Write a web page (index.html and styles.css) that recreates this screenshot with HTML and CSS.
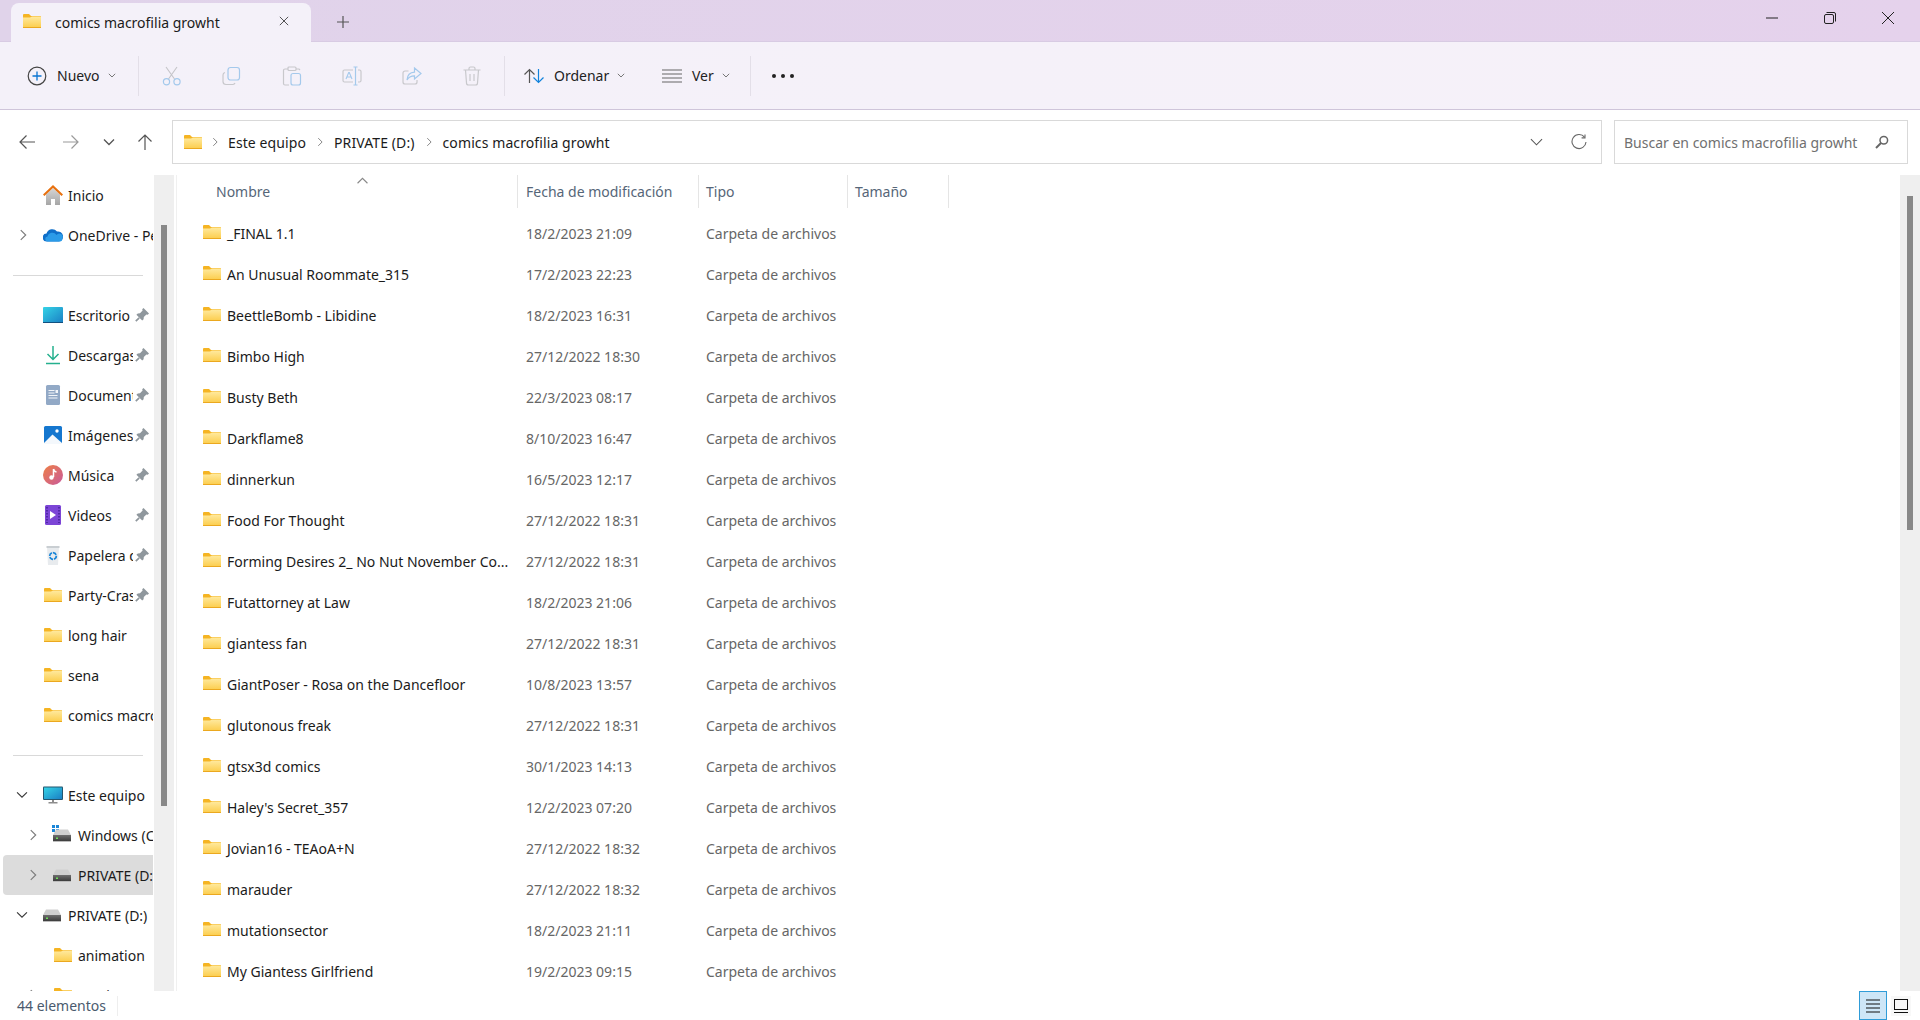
FILE: index.html
```html
<!DOCTYPE html>
<html lang="es">
<head>
  <meta charset="UTF-8" />
  <title>comics macrofilia growht</title>
  <link rel="stylesheet" href="styles.css">
</head>
<body>

<svg class="defs" width="0" height="0">
  <defs>
    <linearGradient id="folderFill" x1="0" y1="0" x2="0" y2="1">
      <stop offset="0" stop-color="#ffeaa0"/>
      <stop offset="1" stop-color="#fccf52"/>
    </linearGradient>
    <linearGradient id="driveFill" x1="0" y1="0" x2="0" y2="1">
      <stop offset="0" stop-color="#6e6e6e"/>
      <stop offset="1" stop-color="#3c3c3c"/>
    </linearGradient>
    <symbol id="folder" viewBox="0 0 18 14">
      <path d="M0 1a1 1 0 0 1 1-1h5l2 2h9a1 1 0 0 1 1 1v10a1 1 0 0 1-1 1H1a1 1 0 0 1-1-1z" fill="#f5b423"/>
      <path d="M0 3.400h7l2-1h8a1 1 0 0 1 1 1V13H0z" fill="url(#folderFill)"/>
      <rect x="0" y="13" width="18" height="1" fill="#eba81f"/>
    </symbol>
    <symbol id="pin" viewBox="0 0 14 14">
      <path d="M8.500 0 14 5.500 12.700 6.800 11.400 6.400 8.800 9 8.600 11.200 7.200 12.600 1.400 6.800 2.800 5.400 5 5.200 7.600 2.600 7.200 1.300z" fill="#8f979d"/>
      <path d="M4.200 9.800 .8 13.200" stroke="#8f979d" stroke-width="1.700" fill="none"/>
    </symbol>
    <symbol id="chev-right" viewBox="0 0 10 14">
      <path d="M2.500 1.500 8 7 2.500 12.500" fill="none" stroke="#7c7c7c" stroke-width="1.300"/>
    </symbol>
    <symbol id="chev-down" viewBox="0 0 14 10">
      <path d="M1.500 2 7 7.500 12.500 2" fill="none" stroke="#3a3a3a" stroke-width="1.300"/>
    </symbol>
    <symbol id="drive" viewBox="0 0 20 14">
      <path d="M3 1.500h12L18 7H0z" fill="#cfcfcf"/>
      <rect x="0" y="7" width="18" height="6" fill="url(#driveFill)"/>
      <rect x="0" y="13" width="18" height="1" fill="#bdbdbd"/>
      <rect x="3" y="9.500" width="2" height="1.500" fill="#6fe05a"/>
    </symbol>
  </defs>
</svg>

<header class="titlebar">
  <div class="tab">
    <svg class="ico-folder"><use href="#folder"/></svg>
    <span class="tab-title">comics macrofilia growht</span>
    <svg class="tab-close" viewBox="0 0 12 12"><path d="M1 1l10 10M11 1 1 11" stroke="#333" stroke-width="1" fill="none"/></svg>
  </div>
  <svg class="tab-add" viewBox="0 0 12 12"><path d="M6 0v12M0 6h12" stroke="#555" stroke-width="1.200" fill="none"/></svg>
  <div class="win-controls">
    <svg viewBox="0 0 12 12"><path d="M0 6h12" stroke="#222" stroke-width="1" fill="none"/></svg>
    <svg viewBox="0 0 12 12"><rect x="0.500" y="2.500" width="9" height="9" rx="1.500" fill="none" stroke="#222"/><path d="M2.500 .500H10a1.500 1.500 0 0 1 1.500 1.500v7.500" fill="none" stroke="#222"/></svg>
    <svg viewBox="0 0 12 12"><path d="M0 0l12 12M12 0 0 12" stroke="#222" stroke-width="1" fill="none"/></svg>
  </div>
</header>

<div class="toolbar">
  <div class="tool tool-new">
    <svg class="tool-ico" viewBox="0 0 20 20"><circle cx="10" cy="10" r="8.800" fill="none" stroke="#444" stroke-width="1.200"/><path d="M10 5.500v9M5.500 10h9" stroke="#0a74d1" stroke-width="1.300"/></svg>
    <span>Nuevo</span>
    <svg class="caret" viewBox="0 0 8 5"><path d="M.8.800 4 4 7.200.8" fill="none" stroke="#777"/></svg>
  </div>
  <i class="tool-sep"></i>
  <div class="tool-group">
    <svg class="tool-ico" viewBox="0 0 20 20"><path d="M4 1l8.500 12M15 1 6.500 13" stroke="#c4c4c8" stroke-width="1.100" fill="none"/><circle cx="4.500" cy="15.800" r="3.100" fill="none" stroke="#a4c9ec" stroke-width="1.200"/><circle cx="15" cy="15.800" r="3.100" fill="none" stroke="#a4c9ec" stroke-width="1.200"/></svg>
    <svg class="tool-ico" viewBox="0 0 20 20"><path d="M3 6.500A2.500 2.500 0 0 0 1 9v6.500A3 3 0 0 0 4 18.500h7a2.500 2.500 0 0 0 2-1.500" fill="none" stroke="#c8c8cc" stroke-width="1.200"/><rect x="6" y="1.500" width="11.500" height="12.500" rx="2.500" fill="none" stroke="#a4c9ec" stroke-width="1.200"/></svg>
    <svg class="tool-ico" viewBox="0 0 20 20"><path d="M6 3H3a1.500 1.500 0 0 0-1.500 1.500v13A1.500 1.500 0 0 0 3 19h4M14 3h3l1 1" fill="none" stroke="#c8c8cc" stroke-width="1.200"/><rect x="6" y="1" width="8" height="3.500" rx="1" fill="none" stroke="#c8c8cc" stroke-width="1.200"/><rect x="9" y="7.500" width="9.500" height="11.500" rx="2" fill="none" stroke="#a4c9ec" stroke-width="1.200"/></svg>
    <svg class="tool-ico" viewBox="0 0 20 20"><path d="M11 4H2.500A1.500 1.500 0 0 0 1 5.500v9A1.500 1.500 0 0 0 2.500 16H11M16 4h1.500A1.500 1.500 0 0 1 19 5.500v9a1.500 1.500 0 0 1-1.500 1.500H16" fill="none" stroke="#c8c8cc" stroke-width="1.200"/><path d="M11.500 1h2v18h-2M15.500 1h-2M15.500 19h-2" fill="none" stroke="#a4c9ec" stroke-width="1.200"/><path d="M4 13l2.700-6.500h.6L10 13M5 11h4" fill="none" stroke="#a4c9ec" stroke-width="1.100"/></svg>
    <svg class="tool-ico" viewBox="0 0 20 20"><path d="M6.500 5H3a2 2 0 0 0-2 2v9a2 2 0 0 0 2 2h10a2 2 0 0 0 2-2v-2" fill="none" stroke="#c8c8cc" stroke-width="1.200"/><path d="M12.500 2l6.500 5.500-6.500 5.500V9.800C9 9.800 6.500 11 5 14c.3-4.500 3-7.500 7.500-7.800z" fill="none" stroke="#a4c9ec" stroke-width="1.200"/></svg>
    <svg class="tool-ico" viewBox="0 0 20 20"><path d="M1.500 4h17M7 4V2.500A1.500 1.500 0 0 1 8.500 1h3A1.500 1.500 0 0 1 13 2.500V4M3.500 4l1 13a2 2 0 0 0 2 2h7a2 2 0 0 0 2-2l1-13M8 8v7M12 8v7" fill="none" stroke="#c8c8cc" stroke-width="1.200"/></svg>
  </div>
  <i class="tool-sep"></i>
  <div class="tool tool-sort">
    <svg class="tool-ico" viewBox="0 0 20 16"><path d="M5.500 15V1.500M.5 6.500l5-5 5 5" fill="none" stroke="#555" stroke-width="1.200"/><path d="M14.500 1v13.500M9.500 9.500l5 5 5-5" fill="none" stroke="#1283dc" stroke-width="1.200"/></svg>
    <span>Ordenar</span>
    <svg class="caret" viewBox="0 0 8 5"><path d="M.8.800 4 4 7.200.8" fill="none" stroke="#777"/></svg>
  </div>
  <div class="tool tool-view">
    <svg class="tool-ico" viewBox="0 0 20 14"><path d="M0 1h20M0 5h20M0 9h20M0 13h20" stroke="#666" stroke-width="1.100"/></svg>
    <span>Ver</span>
    <svg class="caret" viewBox="0 0 8 5"><path d="M.8.800 4 4 7.200.8" fill="none" stroke="#777"/></svg>
  </div>
  <i class="tool-sep"></i>
  <div class="more"><i></i><i></i><i></i></div>
</div>

<div class="navbar">
  <div class="nav-btns">
    <svg viewBox="0 0 16 16"><path d="M16 8H1M7.500 1.500 1 8l6.500 6.500" fill="none" stroke="#555" stroke-width="1.200"/></svg>
    <svg class="nav-fwd" viewBox="0 0 16 16"><path d="M0 8h15M8.500 1.500 15 8l-6.500 6.500" fill="none" stroke="#9a9a9a" stroke-width="1.200"/></svg>
    <svg class="nav-down" viewBox="0 0 12 8"><path d="M1 1.500 6 6.500 11 1.500" fill="none" stroke="#555" stroke-width="1.300"/></svg>
    <svg viewBox="0 0 16 16"><path d="M8 16V1M1.500 7.500 8 1l6.500 6.500" fill="none" stroke="#555" stroke-width="1.200"/></svg>
  </div>
  <div class="address">
    <svg class="ico-folder"><use href="#folder"/></svg>
    <svg class="crumb-sep"><use href="#chev-right"/></svg>
    <span>Este equipo</span>
    <svg class="crumb-sep"><use href="#chev-right"/></svg>
    <span>PRIVATE (D:)</span>
    <svg class="crumb-sep"><use href="#chev-right"/></svg>
    <span>comics macrofilia growht</span>
    <svg class="addr-down" viewBox="0 0 14 8"><path d="M1 1l6 6 6-6" fill="none" stroke="#555" stroke-width="1.100"/></svg>
    <svg class="addr-refresh" viewBox="0 0 16 16"><path d="M13.500 3.200A7 7 0 1 0 15 8" fill="none" stroke="#666" stroke-width="1.100"/><path d="M14 .500v3.400h-3.400" fill="none" stroke="#666" stroke-width="1.100"/></svg>
  </div>
  <div class="search">
    <span>Buscar en comics macrofilia growht</span>
    <svg viewBox="0 0 14 14"><circle cx="8.800" cy="5.200" r="3.800" fill="none" stroke="#666" stroke-width="1.500"/><path d="M6 8 1 13" stroke="#666" stroke-width="2"/></svg>
  </div>
</div>

<div class="main">
  <nav class="sidebar">
    <div class="side-item">
      <span class="twist"></span>
      <svg class="side-ico" viewBox="0 0 20 20"><defs><linearGradient id="homeFill" x1="0" y1="0" x2="0" y2="1"><stop offset="0" stop-color="#d6d6d6"/><stop offset="1" stop-color="#a6a6a6"/></linearGradient></defs><path d="M3 9.500 10 3l7 6.500V20h-5v-6H8v6H3z" fill="url(#homeFill)"/><path d="M.7 10.300 10 1.500l9.300 8.800" fill="none" stroke="#e8710f" stroke-width="2.100"/></svg>
      <span class="side-label">Inicio</span>
    </div>
    <div class="side-item">
      <span class="twist"><svg><use href="#chev-right"/></svg></span>
      <svg class="side-ico" viewBox="0 0 20 14"><path d="M4 13.500a4 4 0 0 1-.5-8A6 6 0 0 1 14 3.500a4.500 4.500 0 0 1 2 10z" fill="#0f6fc9"/><path d="M5 13.500a2.500 2.500 0 0 1-.5-5 5 5 0 0 1 9-1.500 3.500 3.500 0 0 1 6 3.500c0 2-1 3-2.500 3z" fill="#2b9be8"/></svg>
      <span class="side-label">OneDrive - Personal</span>
    </div>
    <hr class="side-div">

    <div class="side-item">
      <span class="twist"></span>
      <svg class="side-ico" viewBox="0 0 20 16"><defs><linearGradient id="deskFill" x1="0" y1="0" x2="1" y2="1"><stop offset="0" stop-color="#35d3e6"/><stop offset="1" stop-color="#1a7fc4"/></linearGradient></defs><rect width="20" height="16" rx="1" fill="url(#deskFill)"/><rect y="15" width="20" height="1" fill="#12507f"/></svg>
      <span class="side-label pinned">Escritorio</span>
      <svg class="pin"><use href="#pin"/></svg>
    </div>
    <div class="side-item">
      <span class="twist"></span>
      <svg class="side-ico" viewBox="0 0 20 20"><path d="M10 1v13M4.500 9 10 14.500 15.500 9" fill="none" stroke="#25b08e" stroke-width="1.500"/><path d="M3 18.500h14" stroke="#25b08e" stroke-width="1.600"/></svg>
      <span class="side-label pinned">Descargas</span>
      <svg class="pin"><use href="#pin"/></svg>
    </div>
    <div class="side-item">
      <span class="twist"></span>
      <svg class="side-ico" viewBox="0 0 20 20"><rect x="3" y="0" width="14" height="20" rx="1.500" fill="#92a9c6"/><path d="M5.500 5.500h6M5.500 8h6M5.500 10.500h9M5.500 13h9" stroke="#f2f5f9" stroke-width="1"/><rect x="12.500" y="5" width="2.500" height="3" fill="#f2f5f9"/></svg>
      <span class="side-label pinned">Documentos</span>
      <svg class="pin"><use href="#pin"/></svg>
    </div>
    <div class="side-item">
      <span class="twist"></span>
      <svg class="side-ico" viewBox="0 0 20 18"><rect width="18" height="18" x="1" rx="1.500" fill="#1577cf"/><path d="M1 17 9.500 8.500 19 17v1H1z" fill="#f4f8fc"/><circle cx="14" cy="5" r="1.700" fill="#fff"/></svg>
      <span class="side-label pinned">Imágenes</span>
      <svg class="pin"><use href="#pin"/></svg>
    </div>
    <div class="side-item">
      <span class="twist"></span>
      <svg class="side-ico" viewBox="0 0 20 20"><defs><linearGradient id="musicFill" x1="0" y1="0" x2="1" y2="1"><stop offset="0" stop-color="#ee7f45"/><stop offset="1" stop-color="#c95a9c"/></linearGradient></defs><circle cx="10" cy="10" r="10" fill="url(#musicFill)"/><path d="M10.500 4v8" stroke="#fff" stroke-width="1.500"/><path d="M10.500 4q.5 2.500 3 3" stroke="#fff" stroke-width="1.300" fill="none"/><circle cx="8.500" cy="12.500" r="2.200" fill="#fff"/></svg>
      <span class="side-label pinned">Música</span>
      <svg class="pin"><use href="#pin"/></svg>
    </div>
    <div class="side-item">
      <span class="twist"></span>
      <svg class="side-ico" viewBox="0 0 20 20"><rect x="2" width="16" height="20" rx="1.500" fill="#7c45d6"/><path d="M7 6v8l6-4z" fill="#fff"/><path d="M4 2v16M16 2v16" stroke="#3f1f94" stroke-width="1.400" stroke-dasharray="1.500 1.500"/></svg>
      <span class="side-label pinned">Videos</span>
      <svg class="pin"><use href="#pin"/></svg>
    </div>
    <div class="side-item">
      <span class="twist"></span>
      <svg class="side-ico" viewBox="0 0 20 20"><path d="M4 2h12l-1 18H5z" fill="#e8ebee"/><rect x="3.500" y="1" width="13" height="2" fill="#c9ced2"/><circle cx="10" cy="11" r="3.300" fill="none" stroke="#1b86d8" stroke-width="1.700" stroke-dasharray="4 1"/></svg>
      <span class="side-label pinned">Papelera de reciclaje</span>
      <svg class="pin"><use href="#pin"/></svg>
    </div>
    <div class="side-item">
      <span class="twist"></span>
      <svg class="side-ico ico-side-folder"><use href="#folder"/></svg>
      <span class="side-label pinned">Party-Crasher</span>
      <svg class="pin"><use href="#pin"/></svg>
    </div>
    <div class="side-item">
      <span class="twist"></span>
      <svg class="side-ico ico-side-folder"><use href="#folder"/></svg>
      <span class="side-label">long hair</span>
    </div>
    <div class="side-item">
      <span class="twist"></span>
      <svg class="side-ico ico-side-folder"><use href="#folder"/></svg>
      <span class="side-label">sena</span>
    </div>
    <div class="side-item">
      <span class="twist"></span>
      <svg class="side-ico ico-side-folder"><use href="#folder"/></svg>
      <span class="side-label">comics macrofilia growht</span>
    </div>
    <hr class="side-div">

    <div class="side-item">
      <span class="twist"><svg class="open"><use href="#chev-down"/></svg></span>
      <svg class="side-ico" viewBox="0 0 20 17"><defs><linearGradient id="pcFill" x1="0" y1="0" x2="1" y2="1"><stop offset="0" stop-color="#35d3e6"/><stop offset="1" stop-color="#1a7fc4"/></linearGradient></defs><rect width="20" height="13.500" rx="1" fill="#22566f"/><rect x="1" y="1" width="18" height="11.500" fill="url(#pcFill)"/><rect x="9" y="13.500" width="2" height="2" fill="#8d8d8d"/><rect x="5.500" y="15.500" width="9" height="1.500" fill="#8d8d8d"/></svg>
      <span class="side-label">Este equipo</span>
    </div>
    <div class="side-item level-1">
      <span class="twist"><svg><use href="#chev-right"/></svg></span>
      <span class="side-ico drive-win">
        <svg viewBox="0 0 7 7"><path d="M0 0h3v3H0zM4 0h3v3H4zM0 4h3v3H0zM4 4h3v3H4z" fill="#1b86d8"/></svg>
        <svg class="drive-body"><use href="#drive"/></svg>
      </span>
      <span class="side-label">Windows (C:)</span>
    </div>
    <div class="side-item level-1 selected">
      <span class="twist"><svg><use href="#chev-right"/></svg></span>
      <svg class="side-ico ico-drive"><use href="#drive"/></svg>
      <span class="side-label">PRIVATE (D:)</span>
    </div>
    <div class="side-item">
      <span class="twist"><svg class="open"><use href="#chev-down"/></svg></span>
      <svg class="side-ico ico-drive"><use href="#drive"/></svg>
      <span class="side-label">PRIVATE (D:)</span>
    </div>
    <div class="side-item level-1">
      <span class="twist"></span>
      <svg class="side-ico ico-side-folder"><use href="#folder"/></svg>
      <span class="side-label">animation</span>
    </div>
    <div class="side-item level-1">
      <span class="twist"><svg><use href="#chev-right"/></svg></span>
      <svg class="side-ico ico-side-folder"><use href="#folder"/></svg>
      <span class="side-label">comics</span>
    </div>
  </nav>
  <div class="scrollbar side-scroll"><div class="thumb"></div></div>

  <section class="files">
    <div class="col-head">
      <div class="col col-name">Nombre<svg class="sort-arrow" viewBox="0 0 10 6"><path d="M.5 5.500 5 1l4.500 4.500" fill="none" stroke="#888"/></svg></div>
      <div class="col col-date">Fecha de modificación</div>
      <div class="col col-type">Tipo</div>
      <div class="col col-size">Tamaño</div>
    </div>
    <div class="row"><div class="col-name"><svg class="ico-folder"><use href="#folder"/></svg><span>_FINAL 1.1</span></div><div class="col-date">18/2/2023 21:09</div><div class="col-type">Carpeta de archivos</div></div>
    <div class="row"><div class="col-name"><svg class="ico-folder"><use href="#folder"/></svg><span>An Unusual Roommate_315</span></div><div class="col-date">17/2/2023 22:23</div><div class="col-type">Carpeta de archivos</div></div>
    <div class="row"><div class="col-name"><svg class="ico-folder"><use href="#folder"/></svg><span>BeettleBomb - Libidine</span></div><div class="col-date">18/2/2023 16:31</div><div class="col-type">Carpeta de archivos</div></div>
    <div class="row"><div class="col-name"><svg class="ico-folder"><use href="#folder"/></svg><span>Bimbo High</span></div><div class="col-date">27/12/2022 18:30</div><div class="col-type">Carpeta de archivos</div></div>
    <div class="row"><div class="col-name"><svg class="ico-folder"><use href="#folder"/></svg><span>Busty Beth</span></div><div class="col-date">22/3/2023 08:17</div><div class="col-type">Carpeta de archivos</div></div>
    <div class="row"><div class="col-name"><svg class="ico-folder"><use href="#folder"/></svg><span>Darkflame8</span></div><div class="col-date">8/10/2023 16:47</div><div class="col-type">Carpeta de archivos</div></div>
    <div class="row"><div class="col-name"><svg class="ico-folder"><use href="#folder"/></svg><span>dinnerkun</span></div><div class="col-date">16/5/2023 12:17</div><div class="col-type">Carpeta de archivos</div></div>
    <div class="row"><div class="col-name"><svg class="ico-folder"><use href="#folder"/></svg><span>Food For Thought</span></div><div class="col-date">27/12/2022 18:31</div><div class="col-type">Carpeta de archivos</div></div>
    <div class="row"><div class="col-name"><svg class="ico-folder"><use href="#folder"/></svg><span>Forming Desires 2_ No Nut November Co...</span></div><div class="col-date">27/12/2022 18:31</div><div class="col-type">Carpeta de archivos</div></div>
    <div class="row"><div class="col-name"><svg class="ico-folder"><use href="#folder"/></svg><span>Futattorney at Law</span></div><div class="col-date">18/2/2023 21:06</div><div class="col-type">Carpeta de archivos</div></div>
    <div class="row"><div class="col-name"><svg class="ico-folder"><use href="#folder"/></svg><span>giantess fan</span></div><div class="col-date">27/12/2022 18:31</div><div class="col-type">Carpeta de archivos</div></div>
    <div class="row"><div class="col-name"><svg class="ico-folder"><use href="#folder"/></svg><span>GiantPoser - Rosa on the Dancefloor</span></div><div class="col-date">10/8/2023 13:57</div><div class="col-type">Carpeta de archivos</div></div>
    <div class="row"><div class="col-name"><svg class="ico-folder"><use href="#folder"/></svg><span>glutonous freak</span></div><div class="col-date">27/12/2022 18:31</div><div class="col-type">Carpeta de archivos</div></div>
    <div class="row"><div class="col-name"><svg class="ico-folder"><use href="#folder"/></svg><span>gtsx3d comics</span></div><div class="col-date">30/1/2023 14:13</div><div class="col-type">Carpeta de archivos</div></div>
    <div class="row"><div class="col-name"><svg class="ico-folder"><use href="#folder"/></svg><span>Haley's Secret_357</span></div><div class="col-date">12/2/2023 07:20</div><div class="col-type">Carpeta de archivos</div></div>
    <div class="row"><div class="col-name"><svg class="ico-folder"><use href="#folder"/></svg><span>Jovian16 - TEAoA+N</span></div><div class="col-date">27/12/2022 18:32</div><div class="col-type">Carpeta de archivos</div></div>
    <div class="row"><div class="col-name"><svg class="ico-folder"><use href="#folder"/></svg><span>marauder</span></div><div class="col-date">27/12/2022 18:32</div><div class="col-type">Carpeta de archivos</div></div>
    <div class="row"><div class="col-name"><svg class="ico-folder"><use href="#folder"/></svg><span>mutationsector</span></div><div class="col-date">18/2/2023 21:11</div><div class="col-type">Carpeta de archivos</div></div>
    <div class="row"><div class="col-name"><svg class="ico-folder"><use href="#folder"/></svg><span>My Giantess Girlfriend</span></div><div class="col-date">19/2/2023 09:15</div><div class="col-type">Carpeta de archivos</div></div>
  </section>
  <div class="scrollbar list-scroll"><div class="thumb"></div></div>
</div>

<footer class="statusbar">
  <span class="count">44 elementos</span>
  <i class="status-sep"></i>
  <div class="view-btns">
    <div class="view-btn active">
      <svg viewBox="0 0 14 13"><path d="M0 .500h14M0 4.500h14M0 8.500h14M0 12.500h14" stroke="#111" stroke-width="1"/></svg>
    </div>
    <div class="view-btn">
      <svg viewBox="0 0 14 14"><rect x="0.500" y="0.500" width="13" height="10" fill="none" stroke="#111"/><path d="M0 13.500h14" stroke="#111"/></svg>
    </div>
  </div>
</footer>

</body>
</html>
```

FILE: styles.css
```css
body {
  font-family: "Noto Sans", "Open Sans", sans-serif;
  font-size: 14px;
  color: #1b1b1b;
  margin: 0;
  width: 1920px;
  height: 1020px;
  display: flex;
  flex-direction: column;
  overflow: hidden;
  background-color: #fff;
}

.defs {
  position: absolute;
}

.ico-folder {
  width: 18px;
  height: 14px;
  flex: none;
}

/* title bar */

.titlebar {
  height: 42px;
  flex: none;
  box-sizing: border-box;
  display: flex;
  align-items: flex-end;
  background: linear-gradient(90deg, #e0d3ea, #e5d2ec);
  border-bottom: 1px solid #d8cbe3;
  padding-left: 11px;
}

.tab {
  width: 300px;
  height: 39px;
  box-sizing: border-box;
  display: flex;
  align-items: center;
  padding-left: 12px;
  margin-bottom: -1px;
  background-color: #f4f1f9;
  border-radius: 8px 8px 0 0;
}

.tab .ico-folder {
  margin-top: -3px;
}

.tab-title {
  margin-left: 14px;
  font-size: 14px;
  width: 222px;
  white-space: nowrap;
}

.tab-close {
  width: 10px;
  height: 10px;
  margin-left: 2px;
  margin-top: -3px;
}

.tab-add {
  width: 12px;
  height: 12px;
  margin: 0 0 13px 26px;
}

.win-controls {
  margin-left: auto;
  display: flex;
  align-self: flex-start;
  gap: 46px;
  padding: 12px 26px 0 0;
}

.win-controls svg {
  width: 12px;
  height: 12px;
}

/* command bar */

.toolbar {
  height: 68px;
  flex: none;
  box-sizing: border-box;
  display: flex;
  align-items: center;
  background: linear-gradient(90deg, #f4f1f9, #f6f1f9);
  border-bottom: 1px solid #cfc5da;
  padding-left: 27px;
}

.tool {
  display: flex;
  align-items: center;
  color: #222;
}

.tool-ico {
  width: 20px;
  height: 20px;
  flex: none;
}

.tool-new {
  width: 111px;
}

.tool-new span {
  margin-left: 10px;
}

.caret {
  width: 8px;
  height: 5px;
  margin-left: 8px;
}

.tool-sep {
  width: 1px;
  height: 40px;
  background-color: #e3dfe8;
  flex: none;
}

.tool-group {
  display: flex;
  gap: 40px;
  padding-left: 23px;
  width: 342px;
  flex: none;
  box-sizing: border-box;
  margin-right: 23px;
}

.tool-sort {
  margin-left: 19px;
  width: 104px;
}

.tool-sort span {
  margin-left: 10px;
}

.tool-sort .tool-ico {
  height: 16px;
}

.tool-view {
  margin-left: 34px;
  width: 88px;
}

.tool-view .tool-ico {
  height: 14px;
}

.tool-view span {
  margin-left: 10px;
}

.more {
  display: flex;
  gap: 5px;
  margin-left: 21px;
}

.more i {
  width: 4px;
  height: 4px;
  border-radius: 50%;
  background-color: #222;
}

/* address row */

.navbar {
  height: 65px;
  flex: none;
  box-sizing: border-box;
  display: flex;
  align-items: flex-start;
  padding-top: 10px;
}

.nav-btns {
  width: 172px;
  height: 43px;
  flex: none;
  display: flex;
  align-items: center;
  padding-left: 19px;
  box-sizing: border-box;
}

.nav-btns svg {
  width: 16px;
  height: 16px;
  flex: none;
  margin-right: 28px;
}

.nav-btns .nav-fwd {
  margin-right: 24px;
}

.nav-btns .nav-down {
  width: 12px;
  height: 8px;
  margin-right: 22px;
}

.address,
.search {
  height: 44px;
  box-sizing: border-box;
  border: 1px solid #d9d9d9;
  display: flex;
  align-items: center;
}

.address {
  width: 1430px;
  flex: none;
  padding-left: 11px;
  letter-spacing: 0.1px;
}

.crumb-sep {
  width: 10px;
  height: 14px;
  margin: 0 8px;
  transform: scale(0.7);
}

.address span + .crumb-sep {
  margin: 0 9px;
}

.addr-down {
  width: 13px;
  height: 8px;
  margin-left: auto;
}

.addr-refresh {
  width: 16px;
  height: 16px;
  margin: 0 14px 0 28px;
}

.search {
  width: 294px;
  margin-left: 12px;
  padding: 0 18px 0 9px;
  color: #707070;
  justify-content: space-between;
}

.search svg {
  width: 14px;
  height: 14px;
}

/* sidebar + list */

.main {
  height: 816px;
  flex: none;
  display: flex;
}

.sidebar {
  width: 154px;
  flex: none;
  overflow: hidden;
}

.side-item {
  height: 40px;
  width: 150px;
  margin-left: 3px;
  display: flex;
  align-items: center;
  border-radius: 4px 0 0 4px;
  white-space: nowrap;
  overflow: hidden;
  padding-left: 12px;
  box-sizing: border-box;
}

.side-item.selected {
  background-color: #dcdcdc;
}

.level-1 {
  padding-left: 22px;
}

.twist {
  width: 28px;
  height: 14px;
  flex: none;
  box-sizing: border-box;
  padding-left: 3px;
  display: flex;
  align-items: center;
}

.twist svg {
  width: 10px;
  height: 14px;
  transform: scale(0.9);
}

.twist svg.open {
  width: 14px;
  height: 10px;
  margin-left: -3px;
}

.side-ico {
  width: 20px;
  height: 20px;
  flex: none;
}

.ico-side-folder {
  width: 18px;
  height: 14px;
  margin: 0 1px;
}

.ico-drive {
  height: 14px;
}

.drive-win {
  position: relative;
  display: flex;
  align-items: center;
}

.drive-win svg {
  position: absolute;
  left: -1px;
  top: 0;
  width: 7px;
  height: 7px;
}

.drive-win .drive-body {
  left: 0;
  top: 3px;
  width: 20px;
  height: 14px;
}

.side-label {
  margin-left: 5px;
  flex: none;
}

.side-label.pinned {
  width: 65px;
  overflow: hidden;
}

.pin {
  width: 14px;
  height: 14px;
  flex: none;
  margin-left: 2px;
}

.side-div {
  height: 1px;
  width: 130px;
  margin: 20px 0 19px 13px;
  border: 0;
  background-color: #d9d9d9;
}

.scrollbar {
  width: 20px;
  flex: none;
  background-color: #efefef;
}

.thumb {
  width: 6px;
  margin-left: 7px;
  background-color: #888;
}

.side-scroll .thumb {
  margin-top: 50px;
  height: 581px;
}

.list-scroll .thumb {
  margin-top: 21px;
  height: 334px;
}

.files {
  flex: 1;
  min-width: 0;
  margin-left: 2px;
  border-left: 1px solid #f0f0f0;
  overflow: hidden;
}

.col-head {
  display: flex;
  height: 33px;
  margin-bottom: 5px;
  color: #566678;
}

.col {
  box-sizing: border-box;
  line-height: 33px;
  border-right: 1px solid #e5e5e5;
  white-space: nowrap;
}

.col-name {
  width: 341px;
  flex: none;
  box-sizing: border-box;
  position: relative;
}

.col-date {
  width: 181px;
  flex: none;
  box-sizing: border-box;
  padding-left: 8px;
}

.col-type {
  width: 149px;
  flex: none;
  box-sizing: border-box;
  padding-left: 7px;
}

.col-size {
  width: 101px;
  flex: none;
  box-sizing: border-box;
  padding-left: 7px;
}

.col.col-name {
  padding-left: 39px;
}

.sort-arrow {
  position: absolute;
  left: 180px;
  top: 2px;
  width: 11px;
  height: 7px;
}

.row {
  height: 41px;
  display: flex;
  align-items: center;
  color: #666;
}

.row .col-name {
  display: flex;
  align-items: center;
  padding-left: 26px;
  color: #1b1b1b;
  white-space: nowrap;
}

.row .col-name .ico-folder {
  margin-top: -3px;
}

.row .col-name span {
  margin-left: 6px;
}

/* status bar */

.statusbar {
  flex: 1;
  display: flex;
  align-items: center;
  padding-left: 17px;
  color: #4a5a6e;
}

.count {
  width: 100px;
}

.status-sep {
  width: 1px;
  height: 20px;
  background-color: #eeeeee;
}

.view-btns {
  margin-left: auto;
  display: flex;
  gap: 4px;
  padding-right: 9px;
  align-self: stretch;
}

.view-btn {
  width: 20px;
  height: 20px;
  align-self: center;
  display: flex;
  align-items: center;
  justify-content: center;
  background-color: #f8f8f8;
}

.view-btn svg {
  width: 14px;
  height: 14px;
}

.view-btn.active {
  width: 28px;
  height: 29px;
  box-sizing: border-box;
  border: 1px solid #2f9cd8;
  background-color: #cde6f7;
}
```
